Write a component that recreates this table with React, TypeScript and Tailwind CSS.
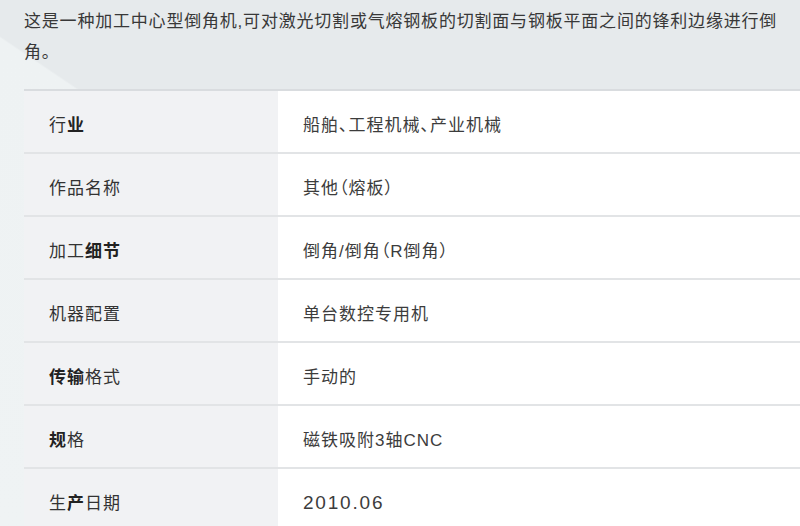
import React from "react";

type Row = { label: React.ReactNode; value: React.ReactNode };

const B = ({ children }: { children: React.ReactNode }) => (
  <span className="font-bold text-[#222]">{children}</span>
);

const rows: Row[] = [
  { label: <>行<B>业</B></>, value: "船舶、工程机械、产业机械" },
  { label: "作品名称", value: "其他（熔板）" },
  { label: <>加工<B>细节</B></>, value: "倒角/倒角（R倒角）" },
  { label: "机器配置", value: "单台数控专用机" },
  { label: <><B>传输</B>格式</>, value: "手动的" },
  { label: <><B>规</B>格</>, value: "磁铁吸附3轴CNC" },
  { label: <>生<B>产</B>日期</>, value: <span className="text-[19px] tracking-[1.8px]">2010.06</span> },
];

export default function App() {
  return (
    <div
      className="w-[800px] h-[526px] overflow-hidden pl-6 bg-[linear-gradient(34deg,#eff3f4_0%,#eef2f3_45.8%,#e6eaec_46%,#e6eaec_100%)] text-[#333]"
      style={{ fontFamily: '"Liberation Sans", "Noto Sans CJK SC", sans-serif' }}
    >
      <p className="pt-[6px] text-[17px] leading-[31px] tracking-[0.8px] text-[#383838] whitespace-nowrap">
        这是一种加工中心型倒角机,可对激光切割或气熔钢板的切割面与钢板平面之间的锋利边缘进行倒
        <br />
        角。
      </p>
      <div className="mt-[21px] border-t-2 border-[#d9dcdf]">
        {rows.map((r, i) => (
          <div key={i} className="flex h-[63px] border-b-2 border-[#e2e4e6]">
            <div className="w-[254px] shrink-0 bg-[#f1f2f4] flex items-center pl-[25px] pt-[8px] text-[17px] tracking-[1px] text-[#333]">
              {r.label}
            </div>
            <div className="flex-1 bg-white flex items-center pl-[25px] pt-[8px] text-[17px] tracking-[1px] text-[#3c3c3c] [font-feature-settings:'palt']">
              {r.value}
            </div>
          </div>
        ))}
      </div>
    </div>
  );
}
